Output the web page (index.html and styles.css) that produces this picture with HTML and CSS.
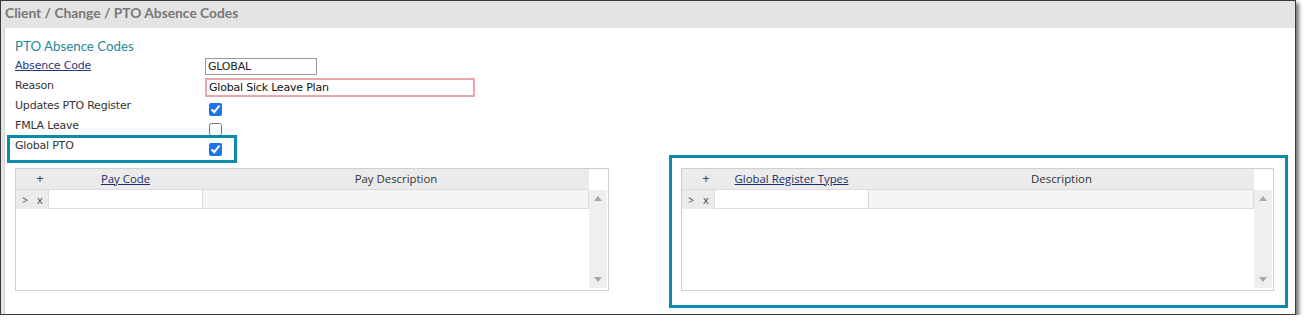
FILE: index.html
```html
<!DOCTYPE html>
<html lang="en">
<head>
<meta charset="utf-8">
<title>PTO Absence Codes</title>
<link rel="stylesheet" href="styles.css">
</head>
<body>
<div class="frame">
  <div class="titlebar">Client / Change / PTO Absence Codes</div>
  <div class="panel">
    <h2 class="section-title">PTO Absence Codes</h2>
    <div class="form">
      <div class="row">
        <a class="label link" href="#">Absence Code</a>
        <div class="txt code">GLOBAL</div>
      </div>
      <div class="row">
        <span class="label">Reason</span>
        <div class="txt reason">Global Sick Leave Plan</div>
      </div>
      <div class="row">
        <span class="label">Updates PTO Register</span>
        <input class="chk" type="checkbox" checked>
      </div>
      <div class="row">
        <span class="label">FMLA Leave</span>
        <input class="chk" type="checkbox">
      </div>
      <div class="row row-highlight">
        <span class="label">Global PTO</span>
        <input class="chk" type="checkbox" checked>
      </div>
    </div>

    <div class="grids">
      <div class="grid grid-left">
        <div class="gh gh-blank"></div>
        <div class="gh gh-plus">+</div>
        <div class="gh"><a class="gh-link" href="#">Pay Code</a></div>
        <div class="gh">Pay Description</div>
        <div class="gh-corner"></div>
        <div class="rh">&gt;</div>
        <div class="rh rh-x">x</div>
        <div class="cell cell-input"></div>
        <div class="cell cell-desc"></div>
        <div class="scroll"><span class="arr up"></span><span class="arr down"></span></div>
        <div class="filler"></div>
      </div>

      <div class="highlight-box">
        <div class="grid grid-right">
          <div class="gh gh-blank"></div>
          <div class="gh gh-plus">+</div>
          <div class="gh"><a class="gh-link" href="#">Global Register Types</a></div>
          <div class="gh">Description</div>
          <div class="gh-corner"></div>
          <div class="rh">&gt;</div>
          <div class="rh rh-x">x</div>
          <div class="cell cell-input"></div>
          <div class="cell cell-desc"></div>
          <div class="scroll"><span class="arr up"></span><span class="arr down"></span></div>
          <div class="filler"></div>
        </div>
      </div>
    </div>
  </div>
</div>
</body>
</html>
```
FILE: styles.css
```css
* { box-sizing: border-box; }

html, body {
  margin: 0;
  padding: 0;
  background: #ffffff;
}

.frame {
  width: 1296px;
  height: 315px;
  border: 1px solid #3a3a3a;
  background: #e4e4e4;
  box-shadow: 3px 3px 4px rgba(0, 0, 0, 0.55);
  display: flex;
  flex-direction: column;
}

.titlebar {
  height: 27px;
  line-height: 23px;
  padding-left: 4px;
  font-family: Lato, "Open Sans", sans-serif;
  font-weight: 700;
  font-size: 13.8px;
  color: #787878;
  flex: none;
}

.panel {
  flex: 1;
  margin-left: 3px;
  border-left: 1px solid #d2d2d2;
  background: #ffffff;
  padding: 9px 0 0 10px;
}

.section-title {
  margin: 0 0 1px 0;
  font-family: Lato, "Open Sans", sans-serif;
  font-weight: 400;
  font-size: 13.3px;
  line-height: 18px;
  color: #1f8a99;
}

.form {
  display: flex;
  flex-direction: column;
}

.row {
  display: flex;
  align-items: flex-start;
  height: 20px;
}

.label {
  width: 190px;
  flex: none;
  padding-top: 1px;
  font-family: "DejaVu Sans", sans-serif;
  font-size: 11px;
  letter-spacing: -0.2px;
  line-height: 18px;
  color: #333333;
}

.link {
  color: #1f3b7d;
  text-decoration: underline;
}

.txt {
  margin-top: 2px;
  font-family: "DejaVu Sans", sans-serif;
  font-size: 11px;
  letter-spacing: -0.2px;
  color: #222222;
  background: #ffffff;
  white-space: nowrap;
}

.txt.code {
  width: 112px;
  height: 17px;
  line-height: 15px;
  border: 1px solid #9a9a9a;
  padding-left: 2px;
}

.txt.reason {
  width: 270px;
  height: 19px;
  line-height: 15px;
  border: 2px solid #e6a8aa;
  padding-left: 2px;
  color: #111111;
}

.chk {
  width: 13px;
  height: 13px;
  margin: 7px 0 0 4px;
  accent-color: #1b74e9;
}

.row-highlight {
  height: 28px;
  width: 230px;
  margin: -1px 0 0 -8px;
  border: 3px solid #0a89a9;
  padding-left: 5px;
}

.row-highlight .label {
  margin-top: -2px;
}

.row-highlight .chk {
  margin-top: 5px;
}

.grids {
  display: flex;
  align-items: flex-start;
  margin-top: 5px;
}

.grid {
  display: grid;
  grid-template-columns: 16px 16px 155px 1fr 19px;
  grid-template-rows: 21px 19px 1fr;
  height: 123px;
  border: 1px solid #cfcfcf;
  background: #ffffff;
  font-family: "Open Sans", sans-serif;
  font-size: 11.4px;
  color: #333333;
}

.grid-left { width: 594px; }
.grid-right { width: 593px; }

.gh {
  background: #ebebeb;
  border-bottom: 1px solid #dcdcdc;
  display: flex;
  align-items: center;
  justify-content: center;
  line-height: 1;
  padding-bottom: 1px;
}

.gh-plus { font-size: 13px; color: #444444; }

.gh-link {
  color: #1b2e6a;
  text-decoration: underline;
}

.gh-corner { background: #ffffff; }

.rh {
  background: #ebebeb;
  display: flex;
  align-items: center;
  justify-content: center;
  font-size: 10px;
  color: #444444;
  padding-left: 2px;
}

.rh-x { font-size: 11px; padding-left: 0; }

.cell {
  border-bottom: 1px solid #dcdcdc;
  border-right: 1px solid #dcdcdc;
}

.cell-input { background: #ffffff; border-left: 1px solid #dcdcdc; }
.cell-desc { background: #f5f5f5; }

.scroll {
  grid-column: 5;
  grid-row: 2 / 4;
  background: #efefef;
  margin: 0 1px 2px 0;
  display: flex;
  flex-direction: column;
  justify-content: space-between;
  align-items: center;
  padding: 6px 0 6px 0;
}

.arr {
  width: 0;
  height: 0;
  border-left: 4px solid transparent;
  border-right: 4px solid transparent;
}

.arr.up { border-bottom: 5px solid #a7a7a7; }
.arr.down { border-top: 5px solid #a7a7a7; }

.filler {
  grid-column: 1 / 5;
  grid-row: 3;
}

.highlight-box {
  margin: -13px 0 0 60px;
  border: 3px solid #0a89a9;
  padding: 10px 11px 14px 9px;
  background: #ffffff;
}
```
